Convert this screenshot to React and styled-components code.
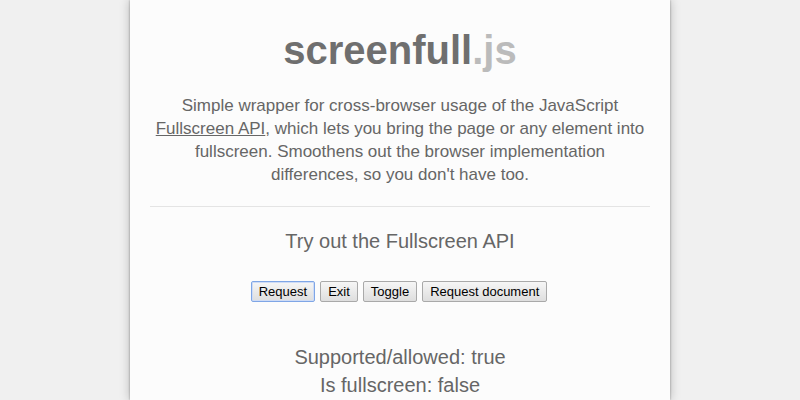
import React from 'react';
import styled, { createGlobalStyle } from 'styled-components';

const GlobalStyle = createGlobalStyle`
  html, body {
    margin: 0;
    padding: 0;
    background: #f0f0f0;
    font-family: 'Liberation Sans', Arial, sans-serif;
    color: #666;
  }
`;

const Page = styled.div`
  width: 540px;
  min-height: 400px;
  margin: 0 auto;
  padding: 0 20px;
  box-sizing: border-box;
  background: #fcfcfc;
  box-shadow: 0 0 2px rgba(0, 0, 0, 0.35), 0 0 10px rgba(0, 0, 0, 0.25);
  text-align: center;
`;

const Title = styled.h1`
  margin: 0;
  padding-top: 27px;
  font-size: 40px;
  line-height: 46px;
  font-weight: bold;
  color: #6f6f6f;
`;

const Ext = styled.span`
  color: #bbb;
`;

const Intro = styled.p`
  margin: 0;
  padding: 21px 0 20px;
  font-size: 17px;
  line-height: 23px;
  a {
    color: #666;
    text-decoration: underline;
  }
`;

const Rule = styled.hr`
  margin: 0;
  border: 0;
  border-top: 1px solid #e4e4e4;
`;

const Subtitle = styled.h2`
  margin: 0;
  padding-top: 22px;
  font-size: 20px;
  line-height: 24px;
  font-weight: normal;
`;

const Buttons = styled.div`
  display: flex;
  justify-content: center;
  gap: 5px;
  margin-top: 28px;
  margin-right: 2px;
`;

const Button = styled.button`
  font-family: 'Liberation Sans', Arial, sans-serif;
  font-size: 13px;
  line-height: 15px;
  color: #000;
  padding: 2px 7px;
  height: 21px;
  border: 1px solid ${(p) => (p.$focused ? '#7fa6e6' : '#a9a9a9')};
  box-shadow: ${(p) => (p.$focused ? 'inset 0 0 0 1px #cfdcf5' : 'none')};
  border-radius: 2px;
  background: linear-gradient(#f6f6f6, #dedede);
`;

const Status = styled.div`
  margin-top: 41px;
  font-size: 20px;
  line-height: 28px;
`;

export default function App() {
  return (
    <>
      <GlobalStyle />
      <Page>
        <Title>
          screenfull<Ext>.js</Ext>
        </Title>
        <Intro>
          Simple wrapper for cross-browser usage of the JavaScript{' '}
          <a href="#">Fullscreen API</a>, which lets you bring the page or any element into
          fullscreen. Smoothens out the browser implementation differences, so you don't have
          too.
        </Intro>
        <Rule />
        <Subtitle>Try out the Fullscreen API</Subtitle>
        <Buttons>
          <Button $focused>Request</Button>
          <Button>Exit</Button>
          <Button>Toggle</Button>
          <Button>Request document</Button>
        </Buttons>
        <Status>
          <div>Supported/allowed: true</div>
          <div>Is fullscreen: false</div>
        </Status>
      </Page>
    </>
  );
}
